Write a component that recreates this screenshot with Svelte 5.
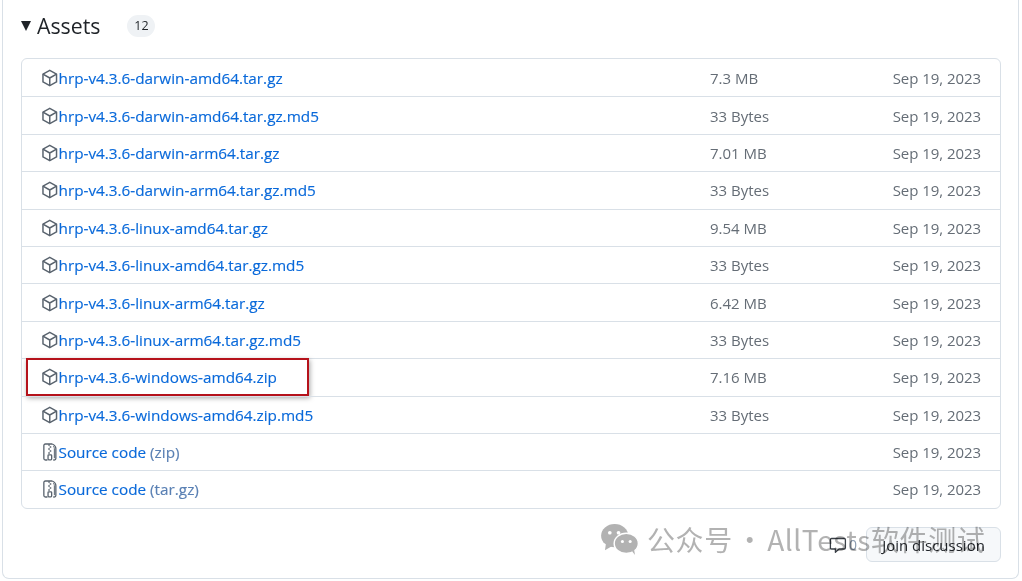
<script>
  const assets = [
    { name: 'hrp-v4.3.6-darwin-amd64.tar.gz', size: '7.3 MB' },
    { name: 'hrp-v4.3.6-darwin-amd64.tar.gz.md5', size: '33 Bytes' },
    { name: 'hrp-v4.3.6-darwin-arm64.tar.gz', size: '7.01 MB' },
    { name: 'hrp-v4.3.6-darwin-arm64.tar.gz.md5', size: '33 Bytes' },
    { name: 'hrp-v4.3.6-linux-amd64.tar.gz', size: '9.54 MB' },
    { name: 'hrp-v4.3.6-linux-amd64.tar.gz.md5', size: '33 Bytes' },
    { name: 'hrp-v4.3.6-linux-arm64.tar.gz', size: '6.42 MB' },
    { name: 'hrp-v4.3.6-linux-arm64.tar.gz.md5', size: '33 Bytes' },
    { name: 'hrp-v4.3.6-windows-amd64.zip', size: '7.16 MB', marked: true },
    { name: 'hrp-v4.3.6-windows-amd64.zip.md5', size: '33 Bytes' },
    { name: 'Source code', suffix: '(zip)', source: true },
    { name: 'Source code', suffix: '(tar.gz)', source: true }
  ];
</script>

<div class="page">
  <div class="frame">
    <div class="heading">
      <span class="caret"></span>
      <h3>Assets</h3>
      <span class="counter">12</span>
    </div>

    <ul class="assets">
      {#each assets as asset}
        <li class="row">
          {#if asset.marked}<span class="marker"></span>{/if}
          <span class="name">
            {#if asset.source}
              <svg class="icon" viewBox="0 0 17 18" width="17" height="18" fill="none" stroke="#59636e" stroke-width="1.3">
                <path d="M11 1H4.2C3.2 1 2.6 1.6 2.6 2.5v13c0 .9.6 1.5 1.6 1.5h2" />
                <path d="M11 1c2.3 1 3.6 3 3.6 4.5v10c0 .9-.6 1.5-1.6 1.5h-1" />
                <path d="M12.2 3.2c.6.8.9 1.6.9 2.4v9.6" stroke-width="1" />
                <path d="M7 2h1.6M8.4 4h1.6M7 6h1.6M8.4 8h1.6M7 10h1.6" />
                <rect x="6.8" y="11.8" width="3.6" height="5" rx=".7" />
              </svg>
            {:else}
              <svg class="icon" viewBox="0 0 16 16" width="18" height="18" fill="none" stroke="#59636e" stroke-width="1.35" stroke-linejoin="round">
                <path d="M8 1 14.2 4.4v7.2L8 15 1.8 11.6V4.4Z" />
                <path d="M1.8 4.4 8 8l6.2-3.6M8 8v7" />
              </svg>
            {/if}
            <a href="#top">{asset.name}</a>
            {#if asset.suffix}<span class="suffix">{asset.suffix}</span>{/if}
          </span>
          <span class="size">{asset.size ?? ''}</span>
          <span class="date">Sep 19, 2023</span>
        </li>
      {/each}
    </ul>

    <div class="footer">
      <svg class="comment" viewBox="0 0 18 18" width="18" height="18" fill="none" stroke="#3a4047" stroke-width="1.3" stroke-linejoin="round">
        <path d="M2.6 2.5h12.6c.7 0 1.2.5 1.2 1.2v8.1c0 .7-.5 1.2-1.2 1.2H10l-3.6 3.3v-3.3H2.6c-.7 0-1.2-.5-1.2-1.2V3.7c0-.7.5-1.2 1.2-1.2Z" />
      </svg>
      <span class="count">0</span>
      <button class="join">Join discussion</button>
    </div>
  </div>

  <div class="watermark">
    <svg viewBox="0 0 40 32" width="39" height="31" fill="#b2b2b2">
      <ellipse cx="15" cy="12" rx="14" ry="12" />
      <path d="M6 20 5 27l7-4Z" />
      <ellipse cx="27" cy="20" rx="12.5" ry="10.5" stroke="#fff" stroke-width="1.5" />
      <path d="M33 28l3 4-1-6Z" />
      <circle cx="10" cy="9" r="1.9" fill="#fff" />
      <circle cx="19" cy="9" r="1.9" fill="#fff" />
      <circle cx="23" cy="18" r="1.6" fill="#fff" />
      <circle cx="31" cy="18" r="1.6" fill="#fff" />
    </svg>
    <span>公众号 · AllTests软件测试</span>
  </div>
</div>

<style>
  :global(body) {
    margin: 0;
    background: #fff;
  }

  .page {
    position: relative;
    width: 1022px;
    height: 581px;
    overflow: hidden;
    font-family: "Open Sans", "Noto Sans", sans-serif;
    color: #1f2328;
  }

  .frame {
    box-sizing: border-box;
    width: 1017px;
    height: 589px;
    margin-left: 2px;
    margin-top: -10px;
    padding: 0 17px 0 18px;
    border: 1px solid #d9e0e7;
    border-top: 0;
    border-radius: 0 0 7px 7px;
  }

  .heading {
    display: flex;
    align-items: center;
    height: 68px;
    padding-top: 3px;
    box-sizing: border-box;
  }

  .caret {
    width: 0;
    height: 0;
    margin-right: 6px;
    border-left: 5px solid transparent;
    border-right: 5px solid transparent;
    border-top: 10px solid #1f2328;
  }

  h3 {
    margin: 0;
    font-size: 21.3px;
    font-weight: 400;
    line-height: 30px;
  }

  .counter {
    display: flex;
    align-items: center;
    justify-content: center;
    width: 28px;
    height: 22px;
    margin-left: 27px;
    border-radius: 11px;
    background: #eff2f5;
    font-size: 12.5px;
  }

  .assets {
    margin: 0;
    padding: 0;
    list-style: none;
    border: 1px solid #d9e0e7;
    border-radius: 6px;
  }

  .row {
    position: relative;
    display: flex;
    align-items: center;
    box-sizing: border-box;
    height: 37.4px;
    padding: 0 19px 0 19px;
    font-size: 15px;
    border-top: 1px solid #d9e0e7;
  }

  .row:first-child {
    border-top: 0;
  }

  .name {
    display: flex;
    align-items: center;
    flex: 1;
    min-width: 0;
    font-size: 15.3px;
    -webkit-text-stroke: 0.15px;
  }

  .icon {
    flex: none;
    width: 17.5px;
  }

  a {
    color: #0969da;
    text-decoration: none;
  }

  .suffix {
    margin-left: 4px;
    color: #5a80b4;
  }

  .size {
    width: 182px;
    color: #656d76;
  }

  .date {
    width: 89px;
    text-align: right;
    white-space: nowrap;
    color: #656d76;
    letter-spacing: -0.05px;
  }

  .marker {
    position: absolute;
    left: 4px;
    top: -1px;
    width: 283px;
    height: 38px;
    box-sizing: border-box;
    border: 2px solid #b5121b;
    box-shadow: 1px 2px 5px rgba(0, 0, 0, 0.35);
    pointer-events: none;
  }

  .footer {
    display: flex;
    align-items: center;
    justify-content: flex-end;
    margin-top: 18px;
    height: 36px;
  }

  .comment {
    margin-right: 2px;
  }

  .count {
    margin-right: 9px;
    font-size: 14px;
    color: #8a9bb0;
  }

  .join {
    width: 135px;
    height: 35px;
    padding: 0;
    border: 1px solid #d9e0e7;
    border-radius: 6px;
    background: #f6f8fa;
    color: #1f2328;
    font: 500 15px "Open Sans", "Noto Sans", sans-serif;
  }

  .watermark {
    position: absolute;
    left: 600px;
    top: 519px;
    display: flex;
    align-items: center;
    gap: 8px;
    color: rgba(130, 130, 130, 0.62);
    font-family: "Noto Sans CJK SC", "Noto Sans", sans-serif;
    font-size: 28px;
    letter-spacing: 0.6px;
    word-spacing: -4px;
    white-space: nowrap;
    mix-blend-mode: multiply;
  }
</style>
